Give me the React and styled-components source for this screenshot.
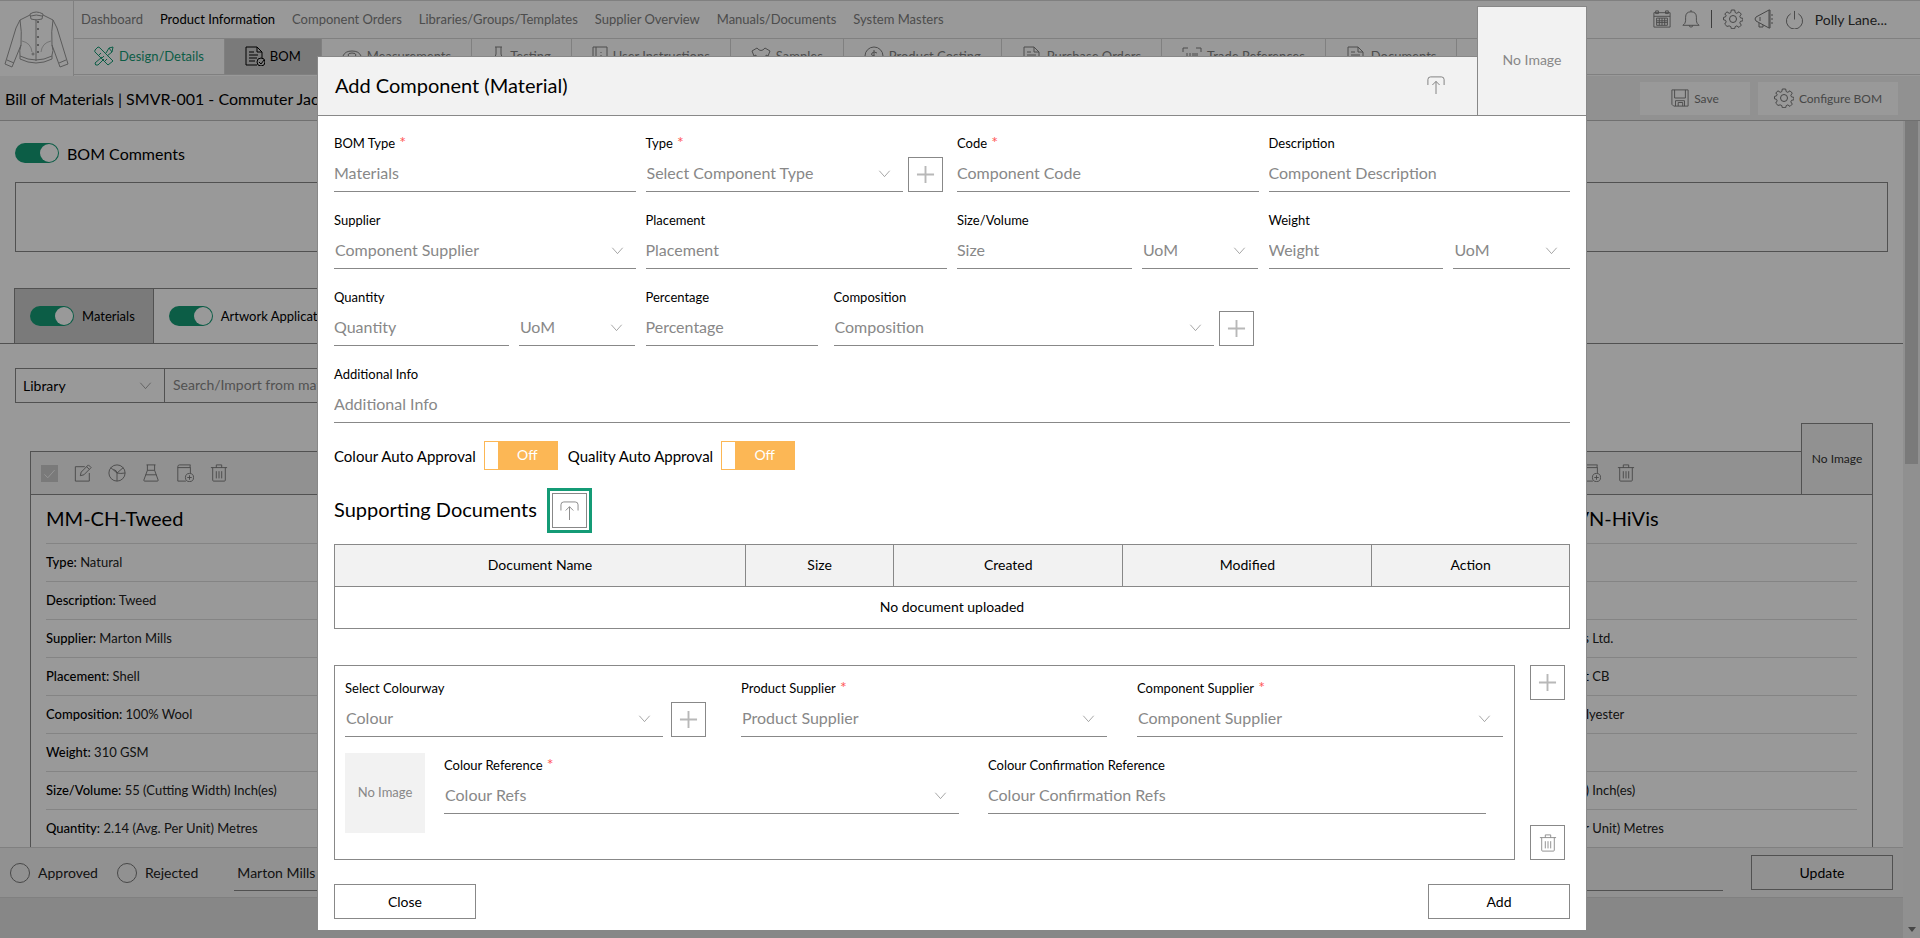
import React, { useId } from 'react';
import styled, { createGlobalStyle } from 'styled-components';

const LINE = '#888888';
const SOFT = '#d6d6d6';
const PANEL = '#f2f2f2';
const GREEN = '#149b76';
const ORANGE = '#fcb755';

const GlobalStyle = createGlobalStyle`
  * { box-sizing: border-box; }
  body {
    margin: 0;
    font-family: Lato, 'Liberation Sans', sans-serif;
    font-size: 13px;
    color: #000;
    background: #fff;
  }
  button, input, select, textarea { font-family: inherit; margin: 0; }
  h1, h2, h3 { margin: 0; font-weight: 400; }
`;

/* ---------- icons ---------- */

const Svg = styled.svg`
  flex: none;
  display: block;
  fill: none;
  stroke: currentColor;
  stroke-width: ${(p) => p.$w || 1};
`;

const Icon = ({ name, size = 20, w }) => {
  const box = BOXES[name] || [20, 20];
  return (
    <Svg
      width={(size * box[0]) / 20}
      height={(size * box[1]) / 20}
      viewBox={`0 0 ${box[0]} ${box[1]}`}
      $w={w}
      aria-hidden="true"
    >
      {ICONS[name]}
    </Svg>
  );
};

const BOXES = { jacket: [73, 75], flask: [13, 20], manual: [16, 20] };

const ICONS = {
  jacket: (
    <g strokeWidth="1">
      <path d="M30 13 Q36 9 43 13 L42 18 Q36 20 31 18 Z M31 15 Q36 13 42 15" />
      <path d="M30 14 L20 19 L16 27 L5 63 L12 66 L21 44 M43 14 L53 19 L57 27 L68 63 L60 66 L52 44" />
      <path d="M20 19 Q22 30 21 44 Q19 50 20 54 L20 58 Q36 66 52 58 L52 54 Q54 50 52 44 Q51 30 53 19" />
      <path d="M20 55 Q36 63 52 55" />
      <path d="M36 18 V60" />
      <path d="M22 40 Q31 42 32 51 M51 40 Q42 42 41 51" strokeOpacity="0.6" />
      <path d="M37 21h2M37 28h2M37 36h2M37 44h2M37 51h2" strokeWidth="2" />
      <path d="M7 59l7 3M66 59l-7 3" />
      <circle cx="33" cy="53" r="1" />
    </g>
  ),
  design: (
    <g>
      <path d="M4 1 L1 4 Q0 6 2 7 L14 19 L19 15 L6 2 Q5 1 4 1Z M5 9l2-2M8 12l2-2M11 15l2-2" />
      <path d="M12 7 L15 2 L19 1 L18 6 L13 10 M15 2l3 4 M8 11 L1 17 Q1 20 4 19 L10 13" />
    </g>
  ),
  bom: (
    <g>
      <path d="M12 19H1V1h11l5 5v6M12 1v5h5" />
      <path d="M4 6h5M4 9h9M4 12h8M4 15h6" />
      <circle cx="16" cy="16" r="4" />
      <path d="M14 16l2 2 3-4" />
    </g>
  ),
  eye: (
    <g>
      <path d="M1 10 Q3 5 10 5 T19 10 Q17 15 10 15 T1 10Z" />
      <ellipse cx="10" cy="9" rx="4" ry="2" />
    </g>
  ),
  flask: <path d="M3 1h7M4 1v7L1 18h11L9 8V1M2 13q3-2 5 0t4 0" />,
  manual: <path d="M1 1h14v18H1zM4 1v18M9 6v1M9 9v5" />,
  shirt: <path d="M6 2 L1 5 L3 10 L5 9 V18 H15 V9 L17 10 L19 5 L14 2 Q10 7 6 2Z" />,
  coin: (
    <g>
      <circle cx="10" cy="10" r="9" />
      <path d="M13 7q-3-2-5 0t2 3 2 3-5 0M10 4v12" />
    </g>
  ),
  doc: <path d="M2 1h10l5 5v13H2zM12 1v5h5M5 6h4M5 9h9M5 12h9" />,
  barcode: <path d="M1 6V2h5M14 2h5v4M1 14v4h5M19 14v4h-5M5 7v7M8 7v7M11 7v7M13 7v7M15 7v7" />,
  calendar: (
    <g>
      <path d="M1 3h18v16H1zM1 7h18" />
      <path d="M3 1h3v3H3zM14 1h3v3h-3z" />
      <path d="M4 9h12v8H4zM7 9v8M10 9v8M13 9v8M4 12h12M4 14h12" />
    </g>
  ),
  bell: <path d="M1 17H19Q16 15 16 12V8Q16 2 10 2T4 8V12Q4 15 1 17ZM8 17q0 2 2 2t2-2M10 0v2" />,
  gear: (
    <g>
      <circle cx="10" cy="10" r="3.5" />
      <path d="M8.300 1h3.400l.5 2.600 1.600.7 2.200-1.500 2.300 2.300-1.500 2.200.7 1.600 2.400.5v2.400l-2.400.5-.7 1.600 1.500 2.200-2.300 2.300-2.200-1.500-1.600.7-.5 2.100H8.300l-.5-2.100-1.600-.7L4 17.400 1.700 15.100l1.500-2.200-.7-1.600L.5 10.800V8.400l2-.5.7-1.600L1.700 5.100 4 2.800l2.200 1.500 1.600-.7z" />
    </g>
  ),
  horn: <path d="M15 1 L2 8 Q0 10 2 12 L15 19 Z M15 1h1v18h-1 M5 14 v4 h4 v-2 M6 8v4 M18 5v2M18 9v2M18 13v2" />,
  power: <path d="M6 4a8.500 8.500 0 1 0 8 0M10 1v9" />,
  save: <path d="M1 1h18v18H3l-2-2zM4 1v9h12V1M5 19v-6h10v6M8 19v-4h5v4" />,
  edit: <path d="M12 3H1.500v16H17V10M7 13l1-4 8-8 3 3-8 8zM14 3l3 3" />,
  ball: (
    <g>
      <circle cx="10" cy="10" r="9" />
      <path d="M10 19v-9L3 4M10 10l7-6M6 6q4 1 4 4M19 10q-5 1-9 0" />
    </g>
  ),
  lab: <path d="M5 1h10M6 1v6L2 18q0 1 1 1h14q1 0 1-1L14 7V1M4 12h12M6 7h8" />,
  docplus: (
    <g>
      <path d="M11 19H2V3q0-2 2-2h12q-1 1 0 3v6M2 4h14" />
      <circle cx="15" cy="15" r="4.500" />
      <path d="M15 12.500v5M12.500 15h5" />
    </g>
  ),
  trash: <path d="M1 4h18M7 4V1h6v3M3 4v14q0 1 1 1h12q1 0 1-1V4M7 8v8M10 8v8M13 8v8" />,
  upload: <path d="M1 10V4q0-3 3-3h12q3 0 3 3v6M10 20V6M6 10l4-4 4 4" />,
  plus: <path d="M1 10h18M10 1v18" stroke="#b8b8b8" strokeWidth="2" />,
  chevron: <path d="M2 5l8 9 8-9" />,
  tick: <path d="M4 11l4 4 8-9" stroke="#ffffff" strokeWidth="1" />,
};

/* ---------- page shell ---------- */

const Page = styled.div`
  position: relative;
  display: flex;
  flex-direction: column;
  height: 100vh;
  min-height: 938px;
  overflow: hidden;
`;

const Header = styled.header`
  display: flex;
  border-top: 1px solid ${SOFT};
`;

const Logo = styled.div`
  width: 74px;
  border-right: 1px solid ${SOFT};
  color: #999;
`;

const HeaderRows = styled.div`
  flex: 1;
  min-width: 0;
`;

const NavRow = styled.div`
  display: flex;
  align-items: center;
  justify-content: space-between;
  height: 38px;
  padding: 0 33px 1px 7px;
  border-bottom: 1px solid ${SOFT};
`;

const Nav = styled.nav`
  display: flex;
  gap: 17px;
`;

const NavLink = styled.a`
  color: ${(p) => (p.$on ? '#000' : '#808080')};
  text-decoration: none;
  line-height: 20px;
`;

const Tools = styled.div`
  display: flex;
  align-items: center;
  gap: 11px;
  font-size: 14px;
  color: #333;
`;

const ToolButton = styled.button`
  padding: 0;
  border: 0;
  background: none;
  color: #777;
`;

const Divider = styled.span`
  width: 1px;
  height: 18px;
  background: #666;
`;

const Tabs = styled.nav`
  display: flex;
  height: 36px;
  border-bottom: 1px solid ${SOFT};
`;

const Tab = styled.a`
  display: flex;
  align-items: center;
  gap: 5px;
  padding: 0 20px 1px;
  border-right: 1px solid ${SOFT};
  color: ${(p) => p.$color || '#808080'};
  background: ${(p) => (p.$on ? '#cccccc' : 'transparent')};
  text-decoration: none;
  white-space: nowrap;
`;

const TitleBar = styled.div`
  display: flex;
  align-items: center;
  gap: 8px;
  height: 45px;
  padding: 0 22px 0 5px;
  background: ${PANEL};
  border-bottom: 1px solid #bbb;
`;

const PageTitle = styled.h1`
  flex: 1;
  font-size: 16px;
`;

const FlatButton = styled.button`
  display: flex;
  align-items: center;
  justify-content: center;
  gap: 5px;
  width: ${(p) => p.$width};
  height: 33px;
  border: 0;
  background: #fff;
  color: #777;
  font-size: 12px;
`;

const Body = styled.div`
  flex: 1;
  display: flex;
  min-height: 0;
`;

const Scrollbar = styled.div`
  display: flex;
  flex-direction: column;
  justify-content: space-between;
  align-items: center;
  width: 17px;
  background: #f1f1f1;
`;

const Thumb = styled.div`
  width: 13px;
  height: 42%;
  background: #cbcbcb;
`;

const ArrowDown = styled.div`
  margin-bottom: 6px;
  border: 4px solid transparent;
  border-top: 5px solid #777;
  border-bottom: 0;
`;

const Column = styled.div`
  flex: 1;
  display: flex;
  flex-direction: column;
  min-width: 0;
`;

const Main = styled.main`
  flex: 1;
  min-height: 0;
  overflow: hidden;
`;

const ToggleLabel = styled.label`
  display: flex;
  align-items: center;
  gap: 8px;
  font-size: ${(p) => (p.$large ? 16 : 13)}px;
`;

const Toggle = styled.input.attrs({ type: 'checkbox', defaultChecked: true })`
  appearance: none;
  flex: none;
  width: 44px;
  height: 20px;
  padding: 1px;
  border-radius: 10px;
  background: ${GREEN};
  &::before {
    content: '';
    display: block;
    width: 18px;
    height: 18px;
    margin-left: auto;
    border-radius: 9px;
    background: #fff;
  }
`;

const Comments = styled.section`
  padding: 22px 15px 36px 15px;
`;

const CommentBox = styled.textarea`
  display: block;
  width: 100%;
  height: 70px;
  margin-top: 19px;
  border: 1px solid ${LINE};
  background: #fff;
  resize: none;
`;

const KindTabs = styled.div`
  display: flex;
  height: 56px;
  padding-left: 14px;
  border-bottom: 1px solid ${LINE};
`;

const KindTab = styled.div`
  display: flex;
  align-items: center;
  padding: 0 18px 0 15px;
  border: solid ${LINE};
  border-width: 1px 1px 0 ${(p) => (p.$on ? 1 : 0)}px;
  background: ${(p) => (p.$on ? '#cccccc' : '#fff')};
`;

const Filter = styled.div`
  display: flex;
  width: 316px;
  height: 35px;
  margin: 24px 0 20px 15px;
  border: 1px solid ${LINE};
`;

const FilterKind = styled.div`
  position: relative;
  flex: none;
  width: 149px;
  border-right: 1px solid ${LINE};
`;

const BareSelect = styled.select`
  appearance: none;
  width: 100%;
  height: 100%;
  padding: 0 7px;
  border: 0;
  background: none;
  font-size: 14px;
  color: #000;
`;

const ChevronSlot = styled.span`
  position: absolute;
  top: 50%;
  right: ${(p) => p.$right}px;
  transform: translateY(-50%);
  color: #777;
  pointer-events: none;
`;

const Search = styled.input`
  flex: 1;
  min-width: 0;
  padding: 0 8px 2px;
  border: 0;
  background: none;
  font-size: 14px;
  &::placeholder { color: ${LINE}; opacity: 1; }
`;

const Cards = styled.div`
  display: grid;
  grid-template-columns: repeat(4, minmax(0, 1fr));
  gap: 33px;
  padding: 0 30px;
`;

const CardBox = styled.article`
  grid-column: ${(p) => p.$column};
`;

const CardHead = styled.div`
  display: flex;
  align-items: flex-end;
`;

const CardTools = styled.div`
  flex: 1;
  display: flex;
  align-items: center;
  gap: 16px;
  height: 44px;
  padding-left: 10px;
  border: solid ${LINE};
  border-width: 1px 0 1px 1px;
  background: ${PANEL};
`;

const CardThumb = styled.div`
  display: grid;
  place-items: center;
  width: 72px;
  height: 72px;
  padding-bottom: 2px;
  border: 1px solid ${LINE};
  background: ${PANEL};
  font-size: 12px;
  color: #333;
`;

const TickBox = styled.label`
  display: grid;
  width: 17px;
  height: 17px;
  > * { grid-area: 1 / 1; }
`;

const TickInput = styled.input`
  appearance: none;
  width: 17px;
  height: 17px;
  background: #cccccc;
`;

const CardBody = styled.div`
  padding: 0 15px;
  border: solid ${LINE};
  border-width: 0 1px;
`;

const CardTitle = styled.h2`
  display: flex;
  height: 49px;
  line-height: 46px;
  font-size: 20px;
  white-space: pre;
  border-bottom: 1px solid #dddddd;
`;

const Fact = styled.div`
  display: flex;
  height: 38px;
  line-height: 36px;
  white-space: pre;
  border-bottom: 1px solid #dddddd;
`;

const Lead = styled.span`
  display: flex;
  justify-content: flex-end;
  width: 136px;
`;

const Key = styled.span`
  font-weight: 500;
`;

const Value = styled.span`
  color: #222;
`;

const FooterBar = styled.footer`
  display: flex;
  align-items: center;
  height: 51px;
  padding: 0 10px;
  border: solid ${SOFT};
  border-width: 1px 0;
  background: ${PANEL};
  font-size: 14px;
`;

const FooterStrip = styled.div`
  height: 40px;
  background: #e2e2e2;
`;

const RadioLabel = styled.label`
  display: flex;
  align-items: center;
  gap: 8px;
  margin-right: 19px;
  color: #222;
`;

const Radio = styled.input.attrs({ type: 'radio' })`
  appearance: none;
  width: 20px;
  height: 20px;
  border: 1px solid #777;
  border-radius: 10px;
`;

const FooterInput = styled.input`
  flex: 1;
  height: 36px;
  margin: 0 28px 0 17px;
  padding: 0 3px;
  border: 0;
  border-bottom: 1px solid ${LINE};
  background: none;
  font-size: 14px;
  color: #222;
`;

const OutlineButton = styled.button`
  width: 142px;
  height: 35px;
  border: 1px solid ${LINE};
  background: ${(p) => (p.$clear ? 'transparent' : '#fff')};
  font-size: 14px;
  color: #000;
`;

/* ---------- dialog ---------- */

const Backdrop = styled.div`
  position: absolute;
  inset: 0;
  padding: 6px 333px 8px 317px;
  background: rgba(0, 0, 0, 0.4);
`;

const DialogHead = styled.div`
  display: flex;
  align-items: flex-end;
`;

const DialogBar = styled.div`
  flex: 1;
  display: flex;
  align-items: center;
  justify-content: space-between;
  height: 60px;
  padding: 0 32px 3px 17px;
  border: solid ${LINE};
  border-width: 1px 0 1px 1px;
  background: ${PANEL};
`;

const DialogTitle = styled.h2`
  font-size: 20px;
`;

const DialogThumb = styled.div`
  display: grid;
  place-items: center;
  width: 110px;
  height: 110px;
  padding-bottom: 3px;
  border: 1px solid ${LINE};
  background: ${PANEL};
  color: ${LINE};
  font-size: 14px;
`;

const DialogBody = styled.form`
  padding: 17px 16px 11px;
  border: solid ${LINE};
  border-width: 0 1px;
  background: #fff;
`;

const FormGrid = styled.div`
  display: grid;
  grid-template-columns: repeat(4, minmax(0, 1fr));
  gap: 18px 10px;
`;

const Span = styled.div`
  display: grid;
  grid-column: span ${(p) => p.$cols};
  grid-template-columns: ${(p) => p.$tracks || '1fr'};
  gap: ${(p) => p.$gap || 0}px;
`;

const Split = styled.div`
  display: grid;
  grid-template-columns: 3fr 2fr;
  align-items: end;
  gap: 10px;
`;

const WithButton = styled.div`
  display: flex;
  align-items: flex-end;
  gap: ${(p) => p.$gap || 5}px;
  padding-right: ${(p) => p.$pad || 0}px;
`;

const FieldBox = styled.div`
  flex: 1;
  min-width: 0;
`;

const FieldLabel = styled.label`
  display: block;
  height: 20px;
  margin-bottom: 3px;
  line-height: 20px;
  font-size: 13px;
`;

const Star = styled.span`
  color: #ff5757;
  font-size: 16px;
  line-height: 16px;
`;

const TextInput = styled.input`
  display: block;
  width: 100%;
  height: 36px;
  padding: 0 0 2px;
  border: 0;
  border-bottom: 1px solid ${LINE};
  background: none;
  font-size: 16px;
  &::placeholder { color: ${LINE}; opacity: 1; }
`;

const SelectWrap = styled.div`
  position: relative;
`;

const Select = styled.select`
  appearance: none;
  display: block;
  width: 100%;
  height: 36px;
  padding: 0 1px 2px;
  border: 0;
  border-bottom: 1px solid ${LINE};
  border-radius: 0;
  background: none;
  font-size: 16px;
  color: ${LINE};
`;

const SquareButton = styled.button`
  display: grid;
  place-items: center;
  flex: none;
  width: 35px;
  height: 35px;
  padding: 0;
  border: 1px solid ${LINE};
  background: #fff;
  color: ${LINE};
`;

const FocusRing = styled.div`
  padding: 2px;
  border: 3px solid ${GREEN};
`;

const ApprovalRow = styled.div`
  display: flex;
  align-items: center;
  gap: 8px;
  margin-top: 18px;
  font-size: 15px;
`;

const Switch = styled.button`
  display: flex;
  width: 74px;
  height: 29px;
  margin-right: 2px;
  padding: 0;
  border: 1px solid ${ORANGE};
  background: ${ORANGE};
  color: #fff;
  font-size: 14px;
  line-height: 25px;
`;

const SwitchKnob = styled.span`
  width: 13px;
  height: 100%;
  background: #fff;
`;

const SwitchText = styled.span`
  flex: 1;
  text-align: center;
`;

const DocumentsHead = styled.div`
  display: flex;
  align-items: center;
  gap: 10px;
  margin: 18px 0 11px;
`;

const SectionTitle = styled.h3`
  padding-bottom: 3px;
  font-size: 20px;
`;

const Table = styled.table`
  width: 100%;
  table-layout: fixed;
  border-collapse: collapse;
  font-size: 14px;
  text-align: center;
`;

const Th = styled.th`
  width: ${(p) => p.$width};
  height: 42px;
  padding: 0 0 2px;
  border: 1px solid ${LINE};
  background: ${PANEL};
  font-weight: 400;
`;

const Td = styled.td`
  height: 42px;
  padding: 0 0 2px;
  border: 1px solid ${LINE};
`;

const ColourwayRow = styled.div`
  display: flex;
  gap: 15px;
  margin-top: 36px;
`;

const ColourwayBox = styled.div`
  flex: 1;
  padding: 12px 11px 26px 10px;
  border: 1px solid ${LINE};
`;

const Thirds = styled.div`
  display: grid;
  grid-template-columns: repeat(3, minmax(0, 1fr));
  gap: 30px;
`;

const RefRow = styled.div`
  display: grid;
  grid-template-columns: 80px minmax(0, 515fr) minmax(0, 508fr);
  column-gap: 19px;
  margin-top: 16px;
  padding-right: 17px;
`;

const RefField = styled.div`
  padding: 2px 0 0 ${(p) => p.$left || 0}px;
`;

const Swatch = styled.div`
  display: grid;
  place-items: center;
  height: 80px;
  padding-bottom: 3px;
  background: ${PANEL};
  color: ${LINE};
  font-size: 13px;
`;

const SideButtons = styled.div`
  display: flex;
  flex-direction: column;
  justify-content: space-between;
  margin-right: 5px;
`;

const Actions = styled.div`
  display: flex;
  justify-content: space-between;
  margin-top: 24px;
`;

/* ---------- composed parts ---------- */

const Label = ({ id, text, required }) => (
  <FieldLabel htmlFor={id}>
    {text}
    {required && <Star> *</Star>}
  </FieldLabel>
);

const TextField = ({ label, hint, required }) => {
  const id = useId();
  return (
    <FieldBox>
      <Label id={id} text={label} required={required} />
      <TextInput id={id} placeholder={hint} />
    </FieldBox>
  );
};

const SelectField = ({ label, hint, required, name }) => {
  const id = useId();
  return (
    <FieldBox>
      {label && <Label id={id} text={label} required={required} />}
      <SelectWrap>
        <Select id={id} aria-label={name}>
          <option>{hint}</option>
        </Select>
        <ChevronSlot $right={12}>
          <Icon name="chevron" size={13} />
        </ChevronSlot>
      </SelectWrap>
    </FieldBox>
  );
};

const AddButton = ({ label }) => (
  <SquareButton type="button" aria-label={label}>
    <Icon name="plus" size={19} />
  </SquareButton>
);

const OffSwitch = ({ id }) => (
  <Switch type="button" role="switch" aria-checked="false" aria-labelledby={id}>
    <SwitchKnob />
    <SwitchText>Off</SwitchText>
  </Switch>
);

const TABS = [
  ['design', 'Design/Details', GREEN],
  ['bom', 'BOM', '#000', true],
  ['eye', 'Measurements'],
  ['flask', 'Testing'],
  ['manual', 'User Instructions'],
  ['shirt', 'Samples'],
  ['coin', 'Product Costing'],
  ['doc', 'Purchase Orders'],
  ['barcode', 'Trade References'],
  ['doc', 'Documents'],
];

const NAV = [
  'Dashboard',
  'Product Information',
  'Component Orders',
  'Libraries/Groups/Templates',
  'Supplier Overview',
  'Manuals/Documents',
  'System Masters',
];

const TWEED = [
  ['Type:', ' Natural'],
  ['Description:', ' Tweed'],
  ['Supplier:', ' Marton Mills'],
  ['Placement:', ' Shell'],
  ['Composition:', ' 100% Wool'],
  ['Weight:', ' 310 GSM'],
  ['Size/Volume:', ' 55 (Cutting Width) Inch(es)'],
  ['Quantity:', ' 2.14 (Avg. Per Unit) Metres'],
];

const HIVIS = [
  ['Type:', ''],
  ['Description:', ''],
  ['Supplier: s', ' Ltd.'],
  ['Placement: t', ' CB'],
  ['Composition: Pol', 'yester'],
  ['Weight:', ''],
  ['Size/Volume: )', ' Inch(es)'],
  ['Quantity: (Avg. Per', ' Unit) Metres'],
];

const CardHeader = () => (
  <CardHead>
    <CardTools>
      <TickBox aria-label="Select component">
        <TickInput type="checkbox" defaultChecked />
        <Icon name="tick" size={17} />
      </TickBox>
      {['edit', 'ball', 'lab', 'docplus', 'trash'].map((n) => (
        <ToolButton key={n} aria-label={n}>
          <Icon name={n} size={18} />
        </ToolButton>
      ))}
    </CardTools>
    <CardThumb>No Image</CardThumb>
  </CardHead>
);

export default function App() {
  return (
    <Page>
      <GlobalStyle />
      <Header>
        <Logo>
          <Icon name="jacket" />
        </Logo>
        <HeaderRows>
          <NavRow>
            <Nav>
              {NAV.map((n) => (
                <NavLink key={n} href="#" $on={n === 'Product Information'}>{n}</NavLink>
              ))}
            </Nav>
            <Tools>
              <ToolButton aria-label="Calendar"><Icon name="calendar" size={18} /></ToolButton>
              <ToolButton aria-label="Notifications"><Icon name="bell" size={18} /></ToolButton>
              <Divider />
              <ToolButton aria-label="Settings"><Icon name="gear" /></ToolButton>
              <ToolButton aria-label="Announcements"><Icon name="horn" /></ToolButton>
              <ToolButton aria-label="Log out"><Icon name="power" size={19} /></ToolButton>
              Polly Lane...
            </Tools>
          </NavRow>
          <Tabs>
            {TABS.map(([icon, text, color, on]) => (
              <Tab key={text} href="#" $color={color} $on={on}>
                <Icon name={icon} />
                {text}
              </Tab>
            ))}
          </Tabs>
        </HeaderRows>
      </Header>
      <TitleBar>
        <PageTitle>Bill of Materials | SMVR-001 - Commuter Jacket</PageTitle>
        <FlatButton $width="110px"><Icon name="save" size={18} />Save</FlatButton>
        <FlatButton $width="140px"><Icon name="gear" size={20} />Configure BOM</FlatButton>
      </TitleBar>
      <Body>
        <Column>
          <Main>
            <Comments>
              <ToggleLabel $large><Toggle />BOM Comments</ToggleLabel>
              <CommentBox aria-label="BOM Comments" />
            </Comments>
            <KindTabs>
              <KindTab $on><ToggleLabel><Toggle />Materials</ToggleLabel></KindTab>
              <KindTab><ToggleLabel><Toggle />Artwork Applications</ToggleLabel></KindTab>
            </KindTabs>
            <Filter>
              <FilterKind>
                <BareSelect aria-label="Source"><option>Library</option></BareSelect>
                <ChevronSlot $right={12}><Icon name="chevron" size={13} /></ChevronSlot>
              </FilterKind>
              <Search aria-label="Search" placeholder="Search/Import from materials" />
            </Filter>
            <Cards>
              <CardBox $column={1}>
                <CardHeader />
                <CardBody>
                  <CardTitle>MM-CH-Tweed</CardTitle>
                  {TWEED.map(([k, v]) => (
                    <Fact key={k}><Key>{k}</Key><Value>{v}</Value></Fact>
                  ))}
                </CardBody>
              </CardBox>
              <CardBox $column={4}>
                <CardHeader />
                <CardBody>
                  <CardTitle><Lead>V</Lead>N-HiVis</CardTitle>
                  {HIVIS.map(([k, v]) => (
                    <Fact key={k}>{v ? <Lead>{k}</Lead> : <Key>{k}</Key>}<Value>{v}</Value></Fact>
                  ))}
                </CardBody>
              </CardBox>
            </Cards>
          </Main>
          <FooterBar>
            <RadioLabel><Radio name="status" />Approved</RadioLabel>
            <RadioLabel><Radio name="status" />Rejected</RadioLabel>
            <FooterInput aria-label="Supplier" defaultValue="Marton Mills" />
            <OutlineButton $clear>Update</OutlineButton>
          </FooterBar>
          <FooterStrip />
        </Column>
        <Scrollbar><Thumb /><ArrowDown /></Scrollbar>
      </Body>

      <Backdrop>
        <div role="dialog" aria-labelledby="dialog-title">
          <DialogHead>
            <DialogBar>
              <DialogTitle id="dialog-title">Add Component (Material)</DialogTitle>
              <ToolButton aria-label="Upload image"><Icon name="upload" size={18} /></ToolButton>
            </DialogBar>
            <DialogThumb>No Image</DialogThumb>
          </DialogHead>
          <DialogBody>
            <FormGrid>
              <TextField label="BOM Type" hint="Materials" required />
              <WithButton $pad={4}>
                <SelectField label="Type" hint="Select Component Type" required />
                <AddButton label="Add type" />
              </WithButton>
              <TextField label="Code" hint="Component Code" required />
              <TextField label="Description" hint="Component Description" />

              <SelectField label="Supplier" hint="Component Supplier" />
              <TextField label="Placement" hint="Placement" />
              <Split>
                <TextField label="Size/Volume" hint="Size" />
                <SelectField name="Size unit" hint="UoM" />
              </Split>
              <Split>
                <TextField label="Weight" hint="Weight" />
                <SelectField name="Weight unit" hint="UoM" />
              </Split>

              <Split>
                <TextField label="Quantity" hint="Quantity" />
                <SelectField name="Quantity unit" hint="UoM" />
              </Split>
              <Span $cols={2} $tracks="172fr 425fr" $gap={16}>
                <TextField label="Percentage" hint="Percentage" />
                <WithButton $pad={5}>
                  <SelectField label="Composition" hint="Composition" />
                  <AddButton label="Add composition" />
                </WithButton>
              </Span>

              <Span $cols={4}>
                <TextField label="Additional Info" hint="Additional Info" />
              </Span>
            </FormGrid>

            <ApprovalRow>
              <span id="colour-approval">Colour Auto Approval</span>
              <OffSwitch id="colour-approval" />
              <span id="quality-approval">Quality Auto Approval</span>
              <OffSwitch id="quality-approval" />
            </ApprovalRow>

            <DocumentsHead>
              <SectionTitle>Supporting Documents</SectionTitle>
              <FocusRing>
                <SquareButton type="button" aria-label="Upload document">
                  <Icon name="upload" size={19} />
                </SquareButton>
              </FocusRing>
            </DocumentsHead>

            <Table>
              <thead>
                <tr>
                  <Th $width="411px">Document Name</Th>
                  <Th $width="12%">Size</Th>
                  <Th>Created</Th>
                  <Th $width="249px">Modified</Th>
                  <Th $width="16%">Action</Th>
                </tr>
              </thead>
              <tbody>
                <tr><Td colSpan={5}>No document uploaded</Td></tr>
              </tbody>
            </Table>

            <ColourwayRow>
              <ColourwayBox>
                <Thirds>
                  <WithButton $gap={8} $pad={5}>
                    <SelectField label="Select Colourway" hint="Colour" />
                    <AddButton label="Add colour" />
                  </WithButton>
                  <SelectField label="Product Supplier" hint="Product Supplier" required />
                  <SelectField label="Component Supplier" hint="Component Supplier" required />
                </Thirds>
                <RefRow>
                  <Swatch>No Image</Swatch>
                  <RefField>
                    <SelectField label="Colour Reference" hint="Colour Refs" required />
                  </RefField>
                  <RefField $left={10}>
                    <TextField label="Colour Confirmation Reference" hint="Colour Confirmation Refs" />
                  </RefField>
                </RefRow>
              </ColourwayBox>
              <SideButtons>
                <AddButton label="Add colourway" />
                <SquareButton type="button" aria-label="Delete colourway">
                  <Icon name="trash" size={18} />
                </SquareButton>
              </SideButtons>
            </ColourwayRow>

            <Actions>
              <OutlineButton type="button">Close</OutlineButton>
              <OutlineButton type="button">Add</OutlineButton>
            </Actions>
          </DialogBody>
        </div>
      </Backdrop>
    </Page>
  );
}
